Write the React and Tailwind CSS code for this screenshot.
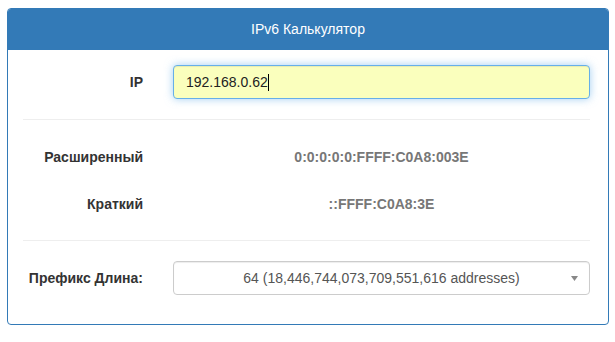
import React from 'react';

export default function App() {
  return (
    <div className="w-[615px] h-[342px] bg-white pt-[8px] pl-[7px] font-['Liberation_Sans',Arial,sans-serif] text-[14px] text-[#333]">
      <div className="w-[602px] border border-[#337ab7] rounded-[4px] overflow-hidden">
        {/* Header */}
        <div className="h-[41px] bg-[#337ab7] text-white flex items-center justify-center">
          IPv6 Калькулятор
        </div>

        <div className="pl-[15px] pr-[18px] pt-[15px] pb-[29px]">
          {/* IP input */}
          <div className="grid grid-cols-[150px_1fr] items-center h-[34px]">
            <label className="text-right pr-[30px] font-bold">IP</label>
            <div className="h-[34px] flex items-center px-[12px] bg-[#faffbd] border border-[#66afe9] rounded-[4px] shadow-[inset_0_1px_1px_rgba(0,0,0,0.075),0_0_8px_rgba(102,175,233,0.6)] text-[#222]">
              <span>192.168.0.62</span>
              <span className="w-px h-[17px] bg-black"></span>
            </div>
          </div>

          <hr className="mt-[20px] mb-[20px] border-0 border-t border-[#eee]" />

          <div className="grid grid-cols-[150px_1fr] items-center h-[34px] mb-[13px]">
            <div className="text-right pr-[30px] font-bold">Расширенный</div>
            <div className="text-center font-bold text-[#777]">0:0:0:0:0:FFFF:C0A8:003E</div>
          </div>

          <div className="grid grid-cols-[150px_1fr] items-center h-[34px]">
            <div className="text-right pr-[30px] font-bold">Краткий</div>
            <div className="text-center font-bold text-[#777]">::FFFF:C0A8:3E</div>
          </div>

          <hr className="mt-[19px] mb-[20px] border-0 border-t border-[#eee]" />

          {/* Prefix length */}
          <div className="grid grid-cols-[150px_1fr] items-center h-[34px]">
            <label className="text-right pr-[30px] font-bold">Префикс Длина:</label>
            <div className="relative h-[34px] flex items-center justify-center border border-[#ccc] rounded-[4px] bg-white text-[#555] shadow-[inset_0_1px_1px_rgba(0,0,0,0.075)]">
              <span>64 (18,446,744,073,709,551,616 addresses)</span>
              <svg className="absolute right-[11px] top-[14px]" width="7" height="5" viewBox="0 0 7 5">
                <path d="M0 0 L7 0 L3.5 5 Z" fill="#888" />
              </svg>
            </div>
          </div>
        </div>
      </div>
    </div>
  );
}
